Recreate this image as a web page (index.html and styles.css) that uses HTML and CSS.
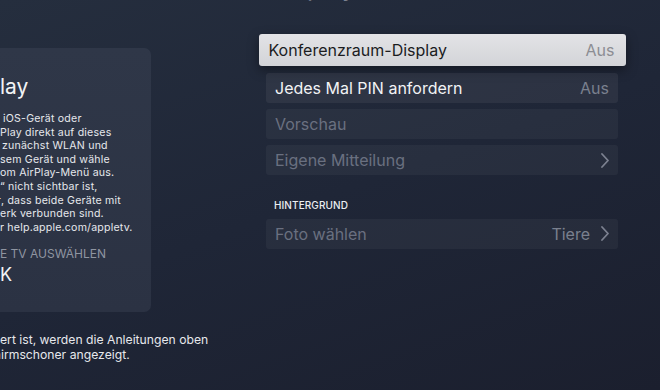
FILE: index.html
```html
<!DOCTYPE html>
<html lang="de">
<head>
<meta charset="utf-8">
<title>Konferenzraum-Display</title>
<link rel="stylesheet" href="styles.css">
</head>
<body>
<div class="screen">
  <div class="title">Konferenzraum-Display</div>
  <div class="main">
    <div class="left">
      <div class="panel">
        <div class="ln head"><span class="cut">Air P</span>lay</div>
        <div class="body">
          <div class="ln off3"><span class="cut">Um Inhalte von einem&nbsp;</span>iOS-Gerät oder</div>
          <div class="ln"><span class="cut">Mac über Air</span>Play direkt auf dieses</div>
          <div class="ln off2"><span class="cut">Apple TV zu streamen, aktiviere&nbsp;</span>zunächst WLAN und</div>
          <div class="ln"><span class="cut">Bluetooth auf die</span>sem Gerät und wähle</div>
          <div class="ln"><span class="cut">dann dieses Apple TV v</span>om AirPlay-Menü aus.</div>
          <div class="ln"><span class="cut">Wenn „Konferenzraum</span>“ nicht sichtbar ist,</div>
          <div class="ln off1"><span class="cut">stelle sicher</span>, dass beide Geräte mit</div>
          <div class="ln"><span class="cut">demselben Netzw</span>erk verbunden sind.</div>
          <div class="ln"><span class="cut">Weitere Infos unte</span>r help.apple.com/appletv.</div>
        </div>
        <div class="ln choose"><span class="cut">DIESES APPL</span>E TV AUSWÄHLEN</div>
        <div class="ln device"><span class="cut">Apple TV 4</span>K</div>
      </div>
      <div class="note">
        <div class="ln"><span class="cut">Wenn Konferenzraum-Display aktivi</span>ert ist, werden die Anleitungen oben</div>
        <div class="ln off1"><span class="cut">über dem Bildsch</span>irmschoner angezeigt.</div>
      </div>
    </div>
    <div class="right">
      <div class="row focused"><span class="label">Konferenzraum-Display</span><span class="value">Aus</span></div>
      <div class="row first"><span class="label bright">Jedes Mal PIN anfordern</span><span class="value">Aus</span></div>
      <div class="row"><span class="label">Vorschau</span></div>
      <div class="row"><span class="label">Eigene Mitteilung</span>
        <svg class="chev" width="8" height="15" viewBox="0 0 8 15"><polyline points="1,1 7,7.5 1,14" fill="none" stroke="currentColor" stroke-width="1.8" stroke-linecap="round" stroke-linejoin="round"/></svg>
      </div>
      <div class="section">HINTERGRUND</div>
      <div class="row photo"><span class="label">Foto wählen</span><span class="value">Tiere</span>
        <svg class="chev" width="8" height="15" viewBox="0 0 8 15"><polyline points="1,1 7,7.5 1,14" fill="none" stroke="currentColor" stroke-width="1.8" stroke-linecap="round" stroke-linejoin="round"/></svg>
      </div>
    </div>
  </div>
</div>
</body>
</html>
```
FILE: styles.css
```css
* { box-sizing: border-box; }
html, body { margin: 0; padding: 0; }
body {
  width: 660px;
  height: 390px;
  overflow: hidden;
  font-family: Inter, "Noto Sans", sans-serif;
  background: linear-gradient(160deg, #252e3e 0%, #1f2637 50%, #1b1f2e 100%);
  color: #eceef1;
}
.screen { width: 660px; height: 390px; overflow: hidden; }
.title {
  font-size: 25px;
  line-height: 25px;
  height: 25px;
  margin-top: -25px;
  margin-bottom: 2px;
  text-align: right;
  padding-right: 304px;
  color: #7c8291;
  white-space: nowrap;
}
.main { display: flex; align-items: flex-start; }
.left { width: 281px; margin-left: -130px; flex: none; }
.panel {
  margin-top: 46px;
  height: 264px;
  border-radius: 7px;
  background: linear-gradient(180deg, #2f3748 0%, #2b3243 100%);
  padding-top: 26px;
}
.ln { display: flex; white-space: nowrap; }
.ln.off1 { padding-left: 1px; }
.ln.off2 { padding-left: 2px; }
.ln.off3 { padding-left: 3px; }
.cut {
  width: 130px;
  flex: none;
  display: flex;
  justify-content: flex-end;
  overflow: visible;
}
.head { font-size: 21px; line-height: 26px; color: #f2f3f5; }
.body { margin-top: 12px; font-size: 10.6px; line-height: 13.6px; letter-spacing: 0.2px; color: #e6e8ec; }
.choose { margin-top: 12px; font-size: 12px; line-height: 16px; color: #8f95a1; }
.device { margin-top: 1.5px; font-size: 18px; line-height: 22px; color: #f2f3f5; }
.note { margin-top: 19.5px; font-size: 12.2px; line-height: 15.6px; color: #e6e8ec; }
.right { margin-left: 115px; width: 352px; flex: none; padding-top: 32px; }
.row {
  height: 30px;
  margin-top: 6px;
  border-radius: 3px;
  background: rgba(255,255,255,0.045);
  display: flex;
  align-items: center;
  padding: 0 9px;
  font-size: 16px;
  color: #6a7080;
}
.row .label { flex: 1; }
.row .value { color: #7a808e; }
.row .bright { color: #f2f3f5; }
.row.first { margin-top: 7px; background: rgba(255,255,255,0.06); }
.row.focused {
  margin: 0 -7.5px;
  height: 32px;
  padding: 0 11px 0 10px;
  background: linear-gradient(180deg, #e3e3e6 0%, #d3d4d8 100%);
  color: #1b1c1f;
  box-shadow: 0 4px 12px rgba(0,0,0,0.4);
}
.row.focused .value { color: #8c8d93; }
.chev { color: #7c8190; flex: none; }
.photo .chev { margin-left: 11px; }
.section {
  margin-top: 23.3px;
  font-size: 10px;
  line-height: 14px;
  font-weight: 500;
  color: #eceef1;
  padding-left: 8px;
  letter-spacing: 0.1px;
}
.row.photo { margin-top: 6.7px; }
```
